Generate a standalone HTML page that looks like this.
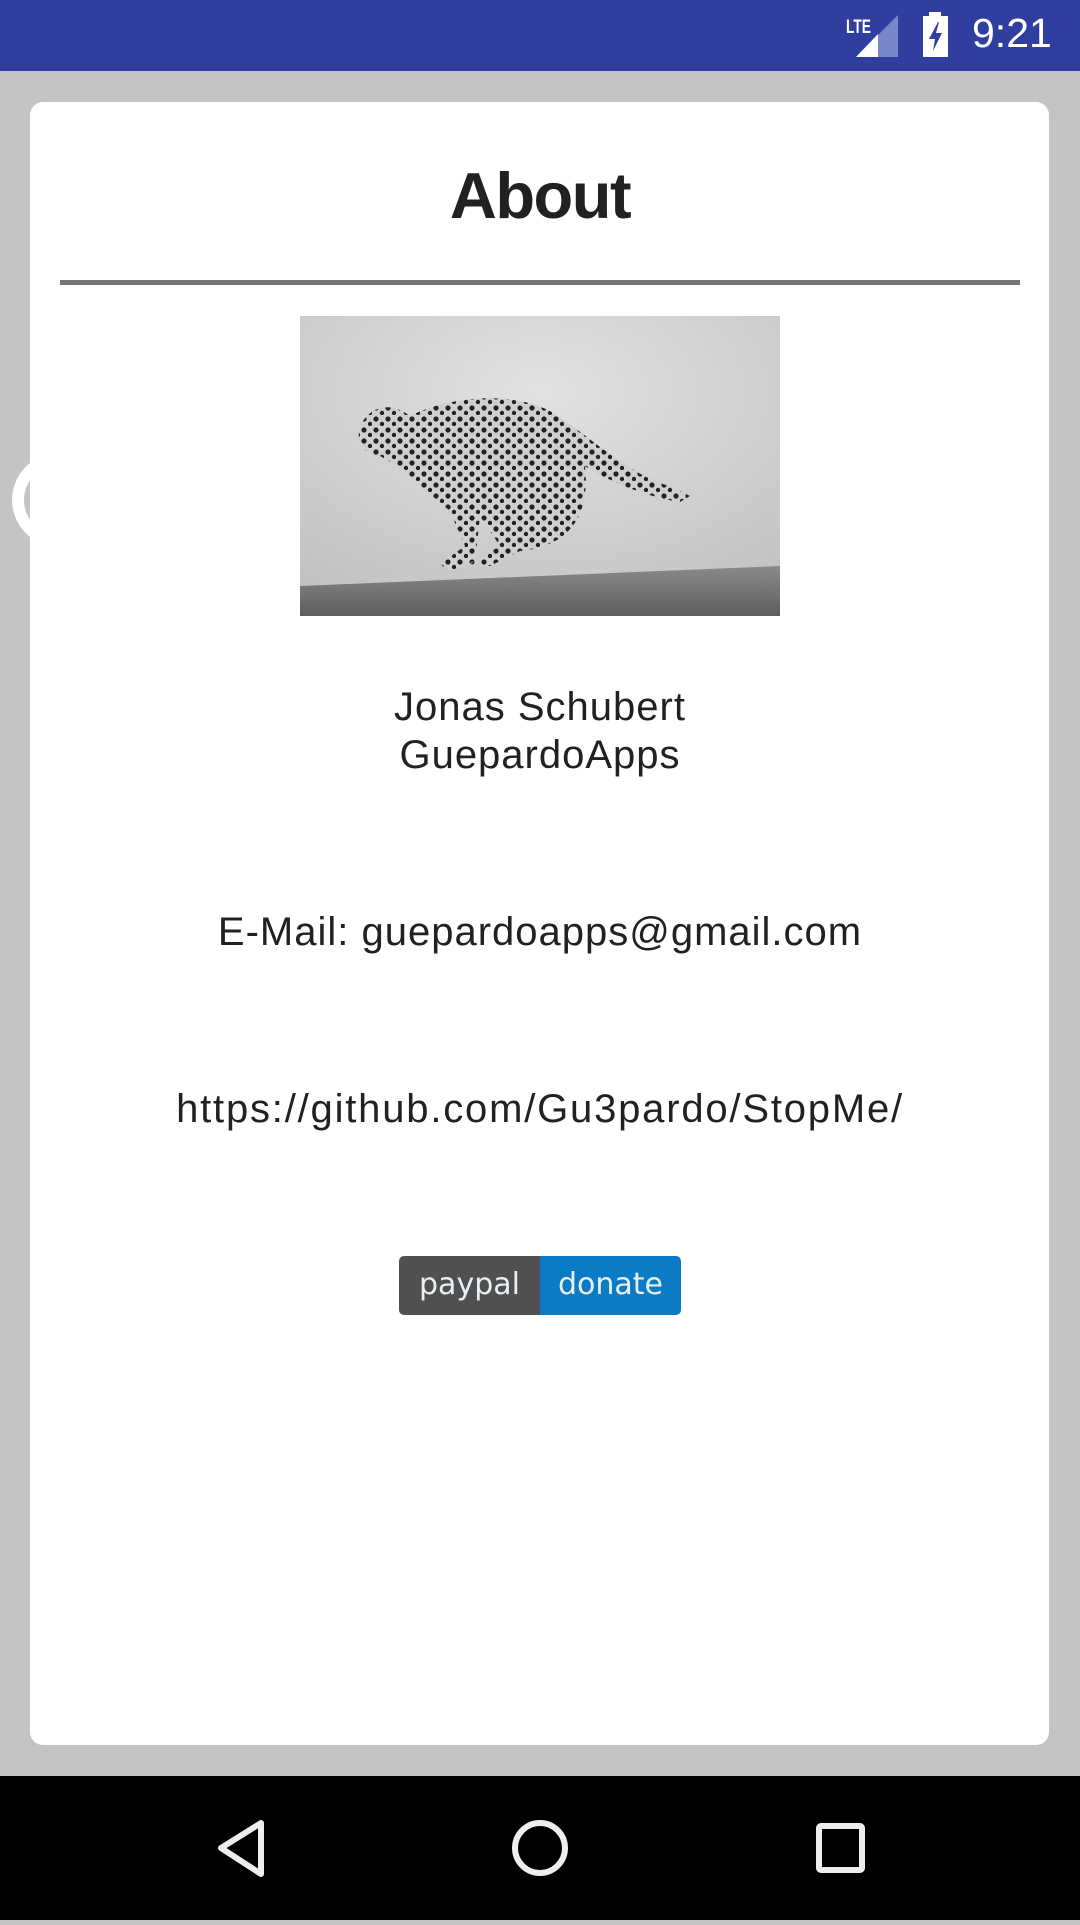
<!DOCTYPE html>
<html><head><meta charset="utf-8"><style>
*{margin:0;padding:0;box-sizing:border-box}
body{width:1080px;height:1920px;background:#c4c4c4;position:relative;overflow:hidden;font-family:"Liberation Sans",sans-serif;color:#212121}
.sb{position:absolute;left:0;top:0;width:1080px;height:71px;background:#303f9f}
.nav{position:absolute;left:0;top:1776px;width:1080px;height:144px;background:#000}
.ring{position:absolute;left:12px;top:453px;width:94px;height:94px;border:12px solid #fff;border-radius:50%}
.card{position:absolute;left:30px;top:102px;width:1019px;height:1643px;background:#fff;border-radius:13px}
.t{position:absolute;left:0;width:1080px;text-align:center;white-space:nowrap}
.b{font-size:40px}
</style></head><body>
<div class="sb">
<svg style="position:absolute;left:840px;top:10px" width="70" height="52">
<text x="6" y="23" font-family="Liberation Sans" font-weight="bold" font-size="19" fill="#fff" textLength="25" lengthAdjust="spacingAndGlyphs">LTE</text>
<polygon points="58,5 58,47 16,47" fill="#7986cb"/>
<polygon points="38,24 38,47 16,47" fill="#fff"/>
</svg>
<svg style="position:absolute;left:920px;top:12px" width="34" height="48">
<rect x="9" y="0" width="12" height="5" fill="#fff"/>
<rect x="3" y="4" width="25" height="41" fill="#fff"/>
<polygon points="18,10 9,27 15,27 13,39 22,21 16,21 19,10" fill="#303f9f"/>
</svg>
<div style="position:absolute;left:972px;top:10px;font-size:41px;color:#fff;font-weight:500">9:21</div>
</div>
<div class="ring"></div>
<div class="card"></div>
<div class="t" style="top:158px;font-size:65px;font-weight:bold;letter-spacing:-1.5px">About</div>
<div style="position:absolute;left:60px;top:280px;width:960px;height:5px;background:#757575"></div>
<svg style="position:absolute;left:300px;top:316px" width="480" height="300">
<defs><radialGradient id="g" cx="0.5" cy="0.25" r="0.8"><stop offset="0" stop-color="#e2e2e2"/><stop offset="1" stop-color="#c2c2c2"/></radialGradient>
<linearGradient id="gr" x1="0" y1="0" x2="0" y2="1"><stop offset="0" stop-color="#8a8a8a"/><stop offset="1" stop-color="#5e5e5e"/></linearGradient>
<pattern id="sp" width="12" height="11" patternUnits="userSpaceOnUse"><rect width="12" height="11" fill="#cfcfcf"/><circle cx="4" cy="4" r="2.6" fill="#222"/><circle cx="10" cy="9" r="2.2" fill="#222"/></pattern></defs>
<rect width="480" height="300" fill="url(#g)"/>
<polygon points="0,270 480,250 480,300 0,300" fill="url(#gr)"/>
<path d="M60,110 C70,90 90,85 110,100 C150,80 210,75 250,95 C290,120 330,160 370,170 L390,180 L380,186 C340,180 300,160 285,150 C290,200 270,230 220,235 L190,250 L170,248 L200,230 L180,200 L175,245 L150,255 L140,248 L165,230 L150,195 C120,170 100,150 80,140 C65,140 55,125 60,110 Z" fill="url(#sp)"/>
</svg>
<div class="t b" style="top:683px;line-height:48px;letter-spacing:1px">Jonas Schubert<br>GuepardoApps</div>
<div class="t b" style="top:910px;letter-spacing:1px">E-Mail: guepardoapps@gmail.com</div>
<div class="t b" style="top:1087px;letter-spacing:1.8px">https://github.com/Gu3pardo/StopMe/</div>
<div style="position:absolute;left:399px;top:1256px;width:282px;height:59px;border-radius:5px;overflow:hidden;display:flex;font-family:'DejaVu Sans',sans-serif;font-size:30px;color:#e8f0f4">
<div style="width:141px;background:#505050;text-align:center;line-height:57px">paypal</div>
<div style="flex:1;background:#0a7bc4;text-align:center;line-height:57px">donate</div>
</div>
<div class="nav">
<svg width="1080" height="144">
<polygon points="261,47 261,98 221,72" fill="none" stroke="#eee" stroke-width="6" stroke-linejoin="round"/>
<circle cx="540" cy="72" r="25" fill="none" stroke="#eee" stroke-width="6"/>
<rect x="819" y="50" width="43" height="44" rx="2" fill="none" stroke="#eee" stroke-width="6"/>
</svg>
</div>
</body></html>
